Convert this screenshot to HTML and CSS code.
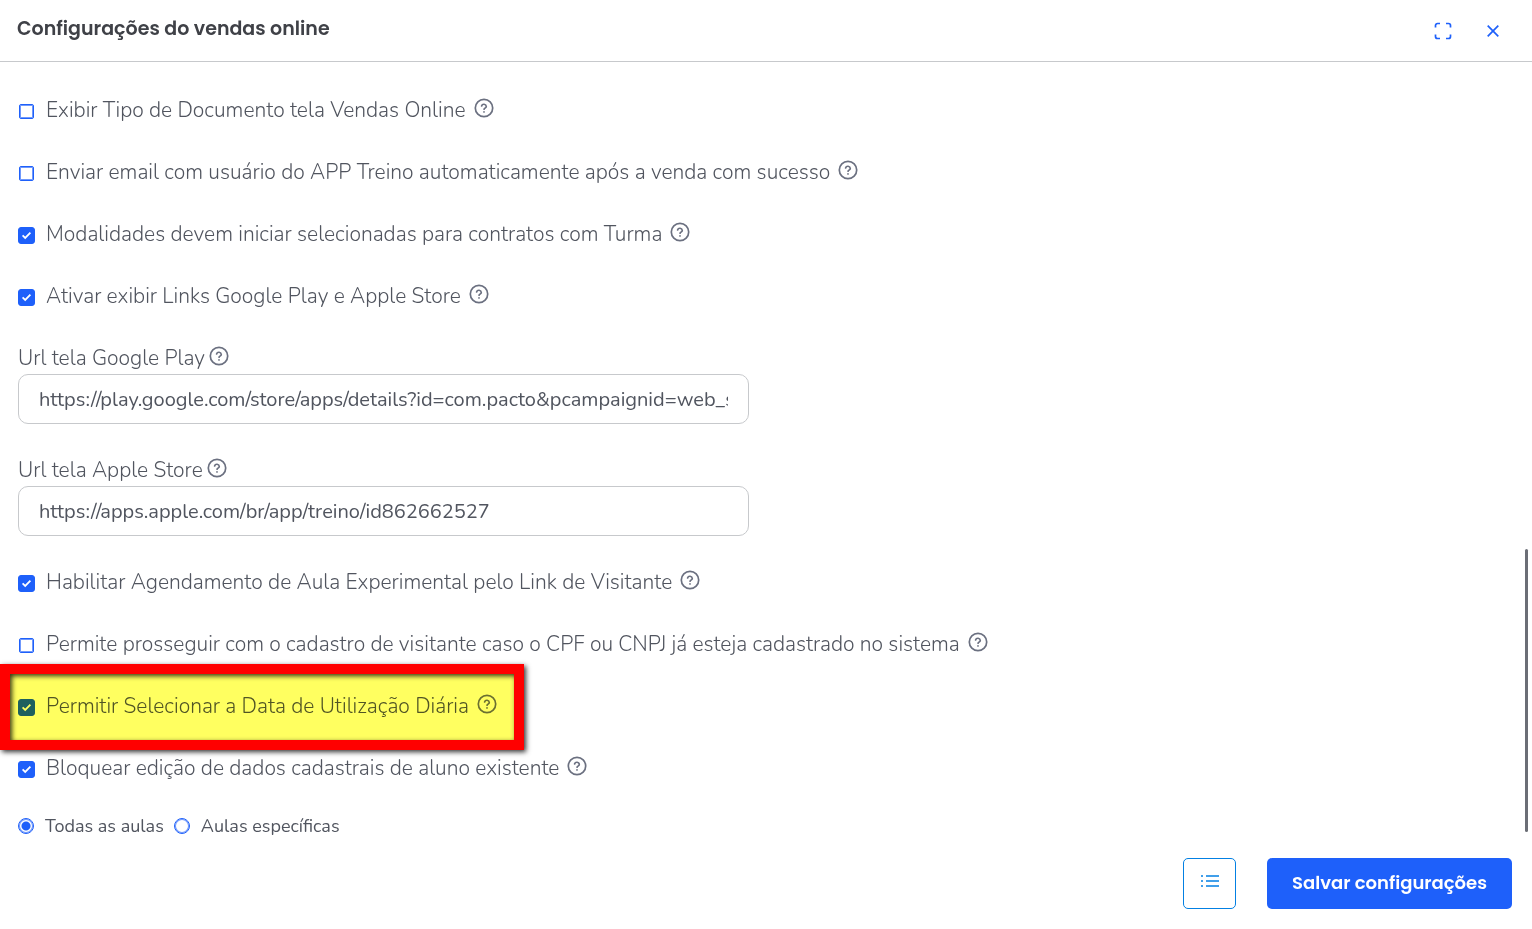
FILE: index.html
```
<!DOCTYPE html>
<html lang="pt-BR">
<head>
    <meta charset="UTF-8">
    <meta name="viewport" content="width=device-width, initial-scale=1.0">
    <title>Configurações do vendas online</title>
    <link rel="stylesheet" href="styles.css">
</head>
<body>

    <!-- Help icon shared by all the options -->
    <svg class="sprite" aria-hidden="true">
        <symbol id="help" viewBox="0 0 20 20">
            <circle cx="10" cy="10" r="8.7"/>
            <path d="M7.6 8a2.4 2.4 0 0 1 4.7.5c0 1.5-2.2 1.7-2.2 2.7"/>
            <path d="M10 13.8v.2"/>
        </symbol>
    </svg>

    <header class="modal-header">
        <h1 class="modal-title">Configurações do vendas online</h1>
        <div class="header-actions">
            <button type="button" class="icon-btn" aria-label="Tela cheia">
                <svg width="18" height="18" viewBox="0 0 18 18">
                    <path d="M1.5 5.5v-2a2 2 0 0 1 2-2h2.5M12 1.5h2.500a2 2 0 0 1 2 2v2M16.5 12.500v2a2 2 0 0 1-2 2H12M6 16.500H3.500a2 2 0 0 1-2-2v-2"/>
                </svg>
            </button>
            <button type="button" class="icon-btn" aria-label="Fechar">
                <svg width="18" height="18" viewBox="0 0 18 18">
                    <path d="M3.7 3.7l10.6 10.6M14.3 3.7L3.7 14.3"/>
                </svg>
            </button>
        </div>
    </header>

    <main class="modal-body">
        <form class="options" id="config-form">
            <div class="option">
                <input type="checkbox" id="tipo-documento">
                <label for="tipo-documento">Exibir Tipo de Documento tela Vendas Online</label>
                <svg class="help"><use href="#help"/></svg>
            </div>
            <div class="option">
                <input type="checkbox" id="enviar-email">
                <label for="enviar-email">Enviar email com usuário do APP Treino automaticamente após a venda com sucesso</label>
                <svg class="help"><use href="#help"/></svg>
            </div>
            <div class="option">
                <input type="checkbox" id="modalidades" checked>
                <label for="modalidades">Modalidades devem iniciar selecionadas para contratos com Turma</label>
                <svg class="help"><use href="#help"/></svg>
            </div>
            <div class="option">
                <input type="checkbox" id="exibir-links" checked>
                <label for="exibir-links">Ativar exibir Links Google Play e Apple Store</label>
                <svg class="help"><use href="#help"/></svg>
            </div>

            <div class="field">
                <div class="field-label">
                    <label for="url-google">Url tela Google Play</label>
                    <svg class="help"><use href="#help"/></svg>
                </div>
                <input type="text" id="url-google" value="https://play.google.com/store/apps/details?id=com.pacto&amp;pcampaignid=web_share">
            </div>
            <div class="field">
                <div class="field-label">
                    <label for="url-apple">Url tela Apple Store</label>
                    <svg class="help"><use href="#help"/></svg>
                </div>
                <input type="text" id="url-apple" value="https://apps.apple.com/br/app/treino/id862662527">
            </div>

            <div class="option">
                <input type="checkbox" id="aula-experimental" checked>
                <label for="aula-experimental">Habilitar Agendamento de Aula Experimental pelo Link de Visitante</label>
                <svg class="help"><use href="#help"/></svg>
            </div>
            <div class="option">
                <input type="checkbox" id="cadastro-visitante">
                <label for="cadastro-visitante">Permite prosseguir com o cadastro de visitante caso o CPF ou CNPJ já esteja cadastrado no sistema</label>
                <svg class="help"><use href="#help"/></svg>
            </div>
            <div class="option highlighted">
                <input type="checkbox" id="data-diaria" checked>
                <label for="data-diaria">Permitir Selecionar a Data de Utilização Diária</label>
                <svg class="help"><use href="#help"/></svg>
            </div>
            <div class="option">
                <input type="checkbox" id="bloquear-edicao" checked>
                <label for="bloquear-edicao">Bloquear edição de dados cadastrais de aluno existente</label>
                <svg class="help"><use href="#help"/></svg>
            </div>

            <div class="radios">
                <input type="radio" name="aulas" id="todas-aulas" checked>
                <label for="todas-aulas">Todas as aulas</label>
                <input type="radio" name="aulas" id="aulas-especificas">
                <label for="aulas-especificas">Aulas específicas</label>
            </div>
        </form>
        <div class="scroll-track">
            <div class="scroll-thumb"></div>
        </div>
    </main>

    <footer class="modal-footer">
        <button type="button" class="log-btn" aria-label="Ver log">
            <svg width="18" height="14" viewBox="0 0 18 14">
                <path d="M5 2h13M5 7h13M5 12h13M0 2h2M0 7h2M0 12h2"/>
            </svg>
        </button>
        <button type="submit" form="config-form" class="save-btn">Salvar configurações</button>
    </footer>

</body>
</html>
```
FILE: styles.css
```
* {
    box-sizing: border-box;
}

body {
    margin: 0;
    min-height: 100vh;
    display: flex;
    flex-direction: column;
    background: #fff;
    color: #51555f;
    font-family: "Nunito", "Open Sans", sans-serif;
    font-size: 21px;
    font-weight: 300;
}

button {
    cursor: pointer;
    font-family: "Poppins", "Inter", sans-serif;
}

svg {
    display: block;
    fill: none;
    stroke: currentColor;
}

.sprite {
    position: absolute;
    width: 0;
    height: 0;
}

/* Header */
.modal-header {
    display: flex;
    justify-content: space-between;
    align-items: center;
    height: 62px;
    padding: 0 30px 0 17px;
    border-bottom: 1px solid #c7c9cc;
}

.modal-title {
    margin: 0 0 4px;
    color: #3f4147;
    font-family: "Poppins", "Inter", sans-serif;
    font-size: 19px;
    font-weight: 600;
}

.header-actions {
    display: flex;
    gap: 32px;
}

.icon-btn {
    padding: 0;
    border: none;
    background: none;
    color: #1e60fa;
    stroke-width: 1.7;
}

/* Options */
.modal-body {
    flex: 1;
    display: flex;
}

.options {
    flex: 1;
    padding: 18px 18px 0;
}

.option {
    display: flex;
    align-items: center;
    width: fit-content;
    height: 62px;
}

.option label {
    padding: 0 8px 0 11px;
    line-height: 28px;
    margin-bottom: 2px;
}

.help {
    flex: none;
    width: 20px;
    height: 20px;
    margin-bottom: 6px;
    color: #6b7080;
    stroke-width: 1.7;
    stroke-linecap: round;
}

input[type="checkbox"] {
    appearance: none;
    flex: none;
    width: 15px;
    height: 15px;
    margin: 1px;
    border: 1px solid #1e60fa;
    border-radius: 2px;
    box-shadow: inset 0 0 0 1px #6f98fc;
}

input[type="checkbox"]:checked {
    width: 17px;
    height: 17px;
    margin: 0;
    border-radius: 3px;
    box-shadow: none;
    background: #1e60fa url("data:image/svg+xml,%3Csvg xmlns='http://www.w3.org/2000/svg' viewBox='0 0 15 15'%3E%3Cpath d='M3.6 7.4l2.6 2.5 5.2-5.2' fill='none' stroke='white' stroke-width='1.8'/%3E%3C/svg%3E") center / 15px 15px no-repeat;
}

/* Marker over the highlighted option */
.highlighted {
    position: relative;
}

.highlighted::after {
    content: "";
    position: absolute;
    inset: -12px -27px -12px -18px;
    border: 10px solid #f00;
    background: #ffff60;
    box-shadow: 2px 2px 5px rgba(0, 0, 0, 0.8), inset 2px 2px 5px rgba(0, 0, 0, 0.8);
    mix-blend-mode: multiply;
    pointer-events: none;
}

/* Text fields */
.field {
    width: calc(50% - 14px);
    padding: 16px 0;
}

.field-label {
    display: flex;
    align-items: center;
    gap: 4px;
    height: 30px;
    padding-bottom: 2px;
}

.field-label .help {
    margin-bottom: 4px;
}

.field input {
    display: block;
    width: 100%;
    height: 50px;
    padding: 0 20px;
    border: 1px solid #c7c9cc;
    border-radius: 10px;
    outline: none;
    background: #fff;
    color: #51555f;
    font-family: inherit;
    font-size: 20px;
    font-weight: 400;
}

/* Radios */
.radios {
    display: flex;
    align-items: center;
    height: 52px;
    font-size: 18px;
    font-weight: 400;
}

.radios label {
    padding: 0 10px 0 11px;
}

input[type="radio"] {
    appearance: none;
    flex: none;
    width: 16px;
    height: 16px;
    margin: 0;
    border: 1px solid #1e60fa;
    border-radius: 50%;
    box-shadow: inset 0 0 0 1px #6f98fc;
}

input[type="radio"]:checked {
    background: radial-gradient(circle, #1e60fa 4px, #fff 5px);
}

/* Scrollbar */
.scroll-track {
    display: flex;
    flex-direction: column;
    justify-content: flex-end;
    width: 7px;
    padding-bottom: 20px;
}

.scroll-thumb {
    width: 3px;
    height: 36.8%;
    border-radius: 2px;
    background: #6b6e76;
}

/* Footer */
.modal-footer {
    display: flex;
    justify-content: flex-end;
    gap: 31px;
    padding: 6px 20px 20px;
}

.log-btn {
    display: flex;
    justify-content: center;
    align-items: center;
    width: 53px;
    height: 51px;
    padding: 0 0 5px;
    border: 1px solid #0380e3;
    border-radius: 5px;
    background: #fff;
    color: #0380e3;
    stroke-width: 1.7;
}

.save-btn {
    height: 51px;
    padding: 0 25px 2px;
    border: none;
    border-radius: 5px;
    background: #1e60fa;
    color: #fff;
    font-size: 18px;
    font-weight: 600;
}
```
